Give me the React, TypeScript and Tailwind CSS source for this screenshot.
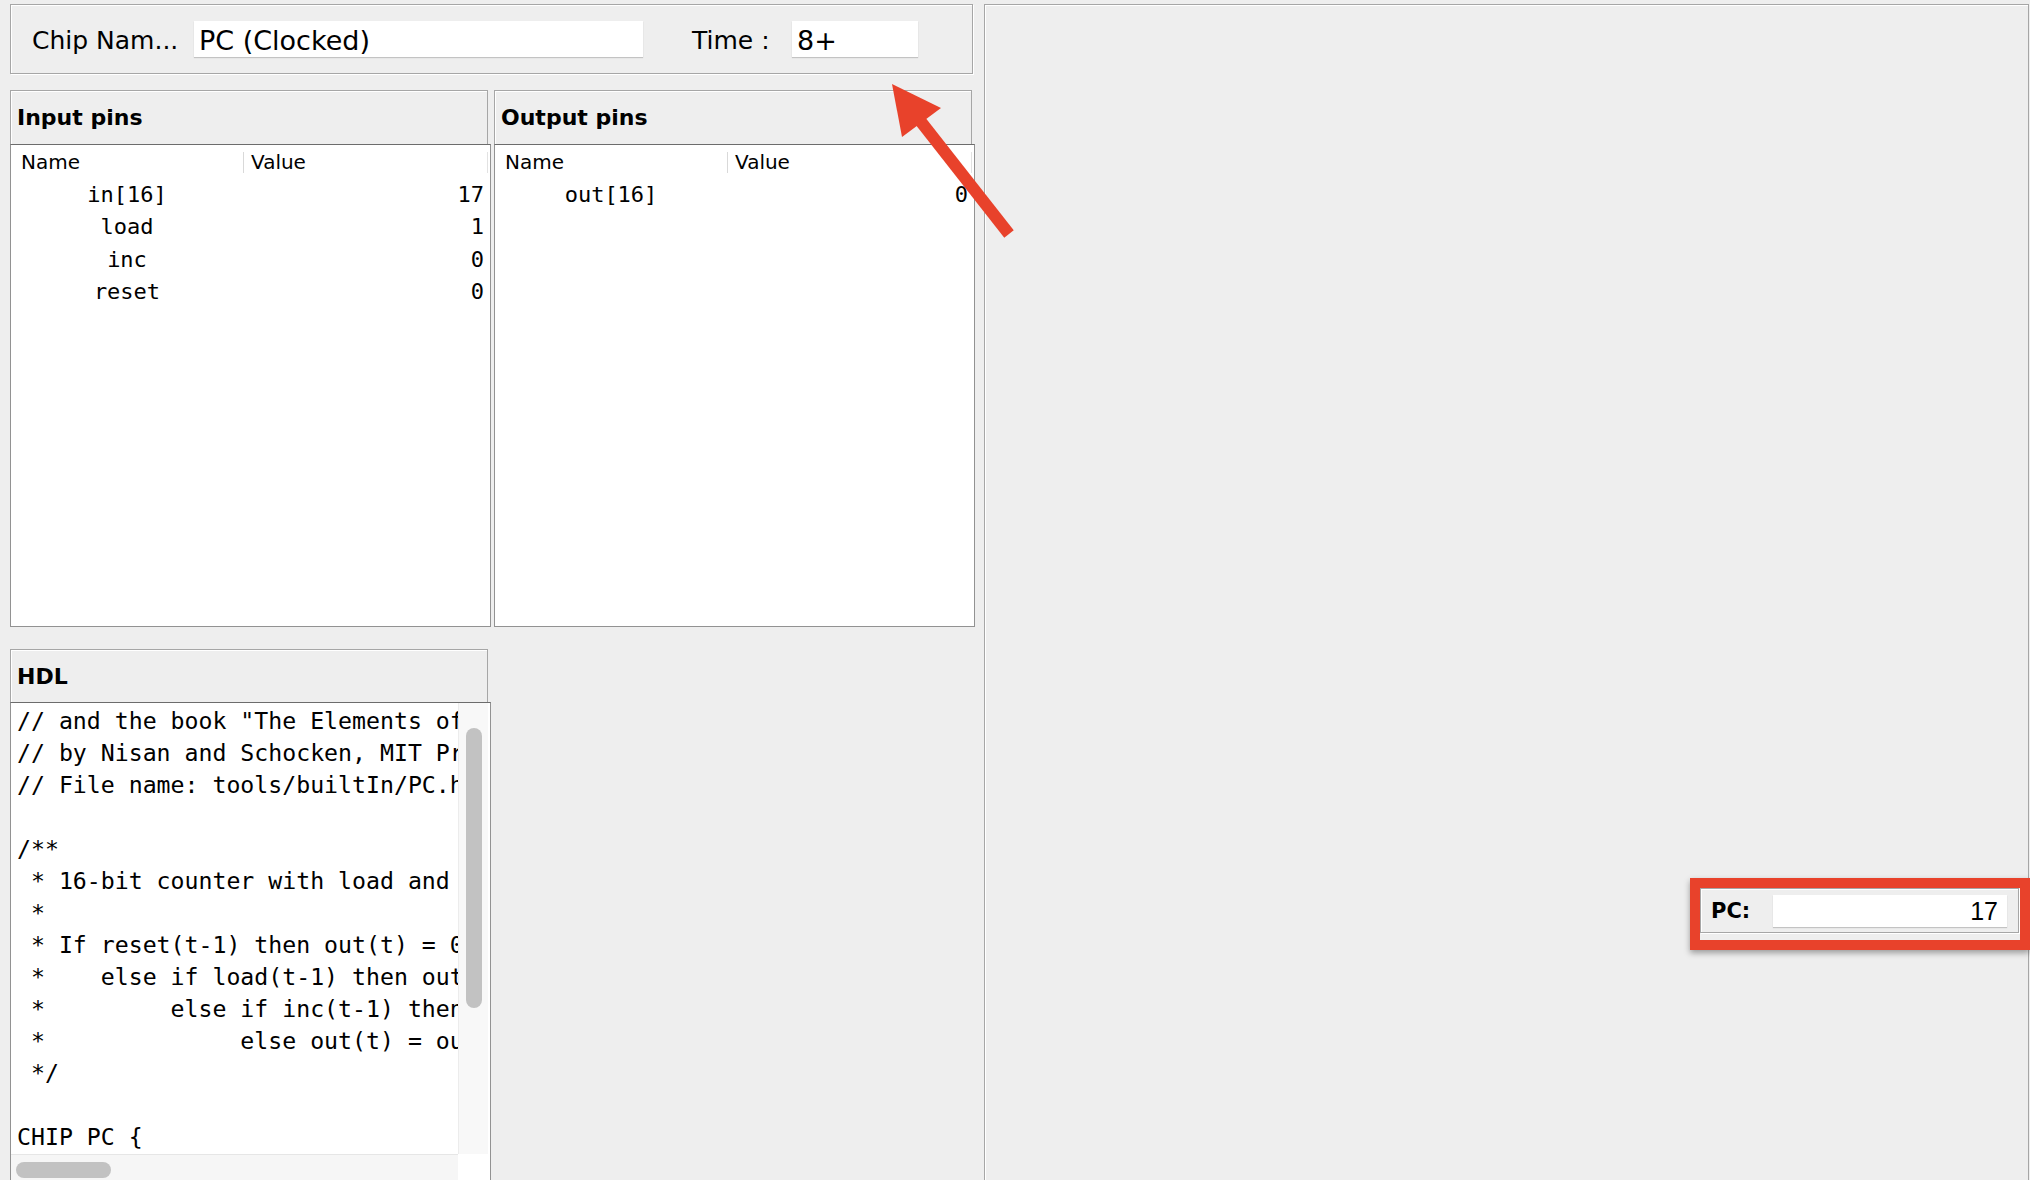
import React from "react";

type Pin = { name: string; value: string };

function PinPanel({ title, pins }: { title: string; pins: Pin[] }) {
  return (
    <div className="flex flex-col w-[481px]">
      <div className="w-[478px] h-[54px] border border-b-0 border-[#a6a6a6] shadow-[inset_1px_1px_0_#ffffff] flex items-center pl-[6px] font-bold text-[22px] text-black">
        {title}
      </div>
      <div className="w-[481px] h-[483px] border border-[#929292] border-t-[#6c6c6c] bg-white flex flex-col">
        <div className="mt-[1px] h-[32px] flex items-center text-[20px]">
          <div className="w-[232px] pl-[10px]">Name</div>
          <div className="w-px h-[21px] bg-[#d9d9d9]" />
          <div className="w-[243px] pl-[7px]">Value</div>
          <div className="w-px h-[21px] bg-[#e2e2e2]" />
        </div>
        {pins.map((p) => (
          <div
            key={p.name}
            className="h-[32.5px] flex items-center font-['DejaVu_Sans_Mono',monospace] text-[22px]"
          >
            <div className="w-[232px] text-center">{p.name}</div>
            <div className="flex-1 text-right pr-[6px]">{p.value}</div>
          </div>
        ))}
      </div>
    </div>
  );
}

const hdl = [
  '// and the book "The Elements of Computing Systems"',
  "// by Nisan and Schocken, MIT Press.",
  "// File name: tools/builtIn/PC.hdl",
  "",
  "/**",
  " * 16-bit counter with load and reset controls.",
  " *",
  " * If reset(t-1) then out(t) = 0",
  " *    else if load(t-1) then out(t) = in(t-1)",
  " *         else if inc(t-1) then out(t) = out(t-1) + 1 (integer addition)",
  " *              else out(t) = out(t-1)",
  " */",
  "",
  "CHIP PC {",
  "    IN in[16], load, inc, reset;",
];

export default function App() {
  return (
    <div className="relative w-[2030px] h-[1180px] overflow-hidden bg-[#eeeeee] flex font-['DejaVu_Sans','Liberation_Sans',sans-serif] text-black">
      {/* Left column */}
      <div className="flex flex-col pl-[10px] pt-[4px] w-[975px] shrink-0">
        {/* Top panel */}
        <div className="flex items-center w-[963px] h-[70px] shrink-0 border border-[#a6a6a6] shadow-[inset_1px_1px_0_#ffffff,1px_1px_0_#ffffff] pl-[21px]">
          <span className="w-[162px] text-[25px] leading-none pt-[3px]">Chip Nam...</span>
          <div className="w-[449px] h-[36px] bg-white shadow-[0_1px_1px_rgba(0,0,0,0.18)] flex items-center pl-[5px] pt-[5px] text-[27px]">
            PC (Clocked)
          </div>
          <span className="ml-[49px] w-[100px] text-[25px] leading-none pt-[3px]">Time :</span>
          <div className="w-[126px] h-[36px] bg-white shadow-[0_1px_1px_rgba(0,0,0,0.18)] flex items-center pl-[5px] pt-[5px] text-[27px]">
            8+
          </div>
        </div>

        {/* Pins */}
        <div className="flex gap-[3px] mt-[16px] shrink-0">
          <PinPanel
            title="Input pins"
            pins={[
              { name: "in[16]", value: "17" },
              { name: "load", value: "1" },
              { name: "inc", value: "0" },
              { name: "reset", value: "0" },
            ]}
          />
          <PinPanel title="Output pins" pins={[{ name: "out[16]", value: "0" }]} />
        </div>

        {/* HDL */}
        <div className="flex flex-col w-[481px] mt-[22px] shrink-0">
          <div className="w-[478px] h-[53px] border border-b-0 border-[#a6a6a6] shadow-[inset_1px_1px_0_#ffffff] flex items-center pl-[6px] font-bold text-[22px]">
            HDL
          </div>
          <div className="w-[481px] h-[480px] border border-b-0 border-[#929292] border-t-[#6c6c6c] bg-white flex flex-col">
            <div className="flex h-[451px] shrink-0">
              <div className="w-[447px] h-[451px] overflow-hidden pl-[6px] pt-[2px] font-['DejaVu_Sans_Mono',monospace] text-[23.2px] leading-[32px] whitespace-pre">
                {hdl.map((l, i) => (
                  <div key={i} className="h-[32px]">
                    {l}
                  </div>
                ))}
              </div>
              <div className="w-[30px] h-[451px] bg-[#f8f8f8] border-l border-[#ececec] pt-[25px] pl-[7px]">
                <div className="w-[16px] h-[280px] rounded-full bg-[#c2c2c2]" />
              </div>
            </div>
            <div className="flex flex-1">
              <div className="w-[447px] bg-[#f6f6f6] border-t border-[#e6e6e6] pt-[7px] pl-[5px]">
                <div className="w-[95px] h-[16px] rounded-full bg-[#c2c2c2]" />
              </div>
              <div className="flex-1 bg-white" />
            </div>
          </div>
        </div>
      </div>

      {/* Right panel */}
      <div className="relative mt-[4px] ml-[9px] w-[1045px] h-[1200px] shrink-0 border border-[#a6a6a6] shadow-[inset_1px_1px_0_#ffffff]">
        <div className="absolute left-[715px] top-[883px] w-[319px] h-[45px] border border-[#a6a6a6] shadow-[inset_1px_1px_0_#ffffff,1px_1px_0_#ffffff] flex items-center pl-[10px]">
          <span className="w-[62px] font-bold text-[21px] pt-[3px]">PC:</span>
          <div className="w-[234px] h-[32px] bg-white shadow-[0_1px_1px_rgba(0,0,0,0.18)] flex items-center justify-end pr-[9px] pt-[3px] text-[25px] font-['Liberation_Sans',sans-serif]">
            17
          </div>
        </div>
      </div>

      {/* Annotations */}
      <div className="absolute left-[1690px] top-[878px] w-[340px] h-[72px] border-[10px] border-[#e8422b] shadow-[0_3px_6px_rgba(0,0,0,0.35)] pointer-events-none" />
      <svg
        className="absolute left-0 top-0 pointer-events-none"
        width={2030}
        height={1180}
        viewBox="0 0 2030 1180"
      >
        <line x1={1009} y1={234} x2={918} y2={118} stroke="#e8422b" strokeWidth={12} />
        <polygon points="892,84 941,108 902,137" fill="#e8422b" />
      </svg>
    </div>
  );
}
